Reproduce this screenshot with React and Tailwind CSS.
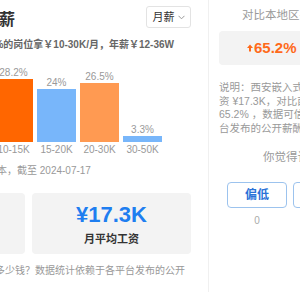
import React from 'react';

const bars = [
  { range: '10-15K', pct: '28.2%', color: 'bg-[#ff6600]', h: 'h-[63px]' },
  { range: '15-20K', pct: '24%', color: 'bg-[#78b6fa]', h: 'h-[53px]' },
  { range: '20-30K', pct: '26.5%', color: 'bg-[#ff9a52]', h: 'h-[59px]' },
  { range: '30-50K', pct: '3.3%', color: 'bg-[#78b6fa]', h: 'h-[6px]' },
];

export default function App() {
  return (
    <div className="w-[300px] h-[300px] overflow-hidden bg-white flex font-['Liberation_Sans','Noto_Sans_CJK_SC',sans-serif]">
      {/* ===== LEFT: distribution ===== */}
      <div className="w-[191px] shrink-0 flex flex-col">
        <div className="mt-[6px] h-[22px] flex items-center justify-between">
          <h2 className="shrink-0 ml-[-97px] mt-[5px] text-[16px] leading-[22px] font-bold text-[#333] whitespace-nowrap">
            西安嵌入式月薪
          </h2>
          <div className="w-[45px] h-[22px] border border-[#e3e3e3] rounded-[3px] flex items-center justify-center gap-[3px] text-[11px] text-[#333]">
            月薪
            <svg width="7" height="5" viewBox="0 0 7 5" fill="none">
              <path d="M0.5 0.8 L3.5 3.8 L6.5 0.8" stroke="#999" strokeWidth="1" />
            </svg>
          </div>
        </div>

        <p className="mt-[10px] ml-[-25px] text-[10px] leading-[14px] font-bold text-[#666] whitespace-nowrap">
          78.7%的岗位拿￥10-30K/月，年薪￥12-36W
        </p>

        <div className="mt-[15px] ml-[-6px] flex items-end gap-[4px]">
          {bars.map(b => (
            <div key={b.range} className="w-[39px] shrink-0 flex flex-col items-center">
              <span className="text-[10px] leading-[12px] text-[#999]">{b.pct}</span>
              <div className={`w-full ${b.h} ${b.color}`} />
            </div>
          ))}
        </div>
        <div className="mt-[1px] ml-[-6px] flex gap-[4px]">
          {bars.map(b => (
            <span key={b.range} className="w-[39px] shrink-0 text-center text-[10px] leading-[14px] text-[#999]">
              {b.range}
            </span>
          ))}
        </div>

        <p className="mt-[7px] ml-[-13px] text-[10px] leading-[14px] text-[#999] whitespace-nowrap">
          样本，截至 2024-07-17
        </p>

        <div className="mt-[15px] flex gap-[7px]">
          <div className="w-[159px] h-[61px] shrink-0 ml-[-134px] bg-[#f3f3f3] rounded-[4px]" />
          <div className="w-[159px] h-[61px] shrink-0 bg-[#f3f3f3] rounded-[4px] flex flex-col items-center pt-[9px]">
            <span className="text-[22px] leading-[26px] font-bold text-[#1e7ef0]">¥17.3K</span>
            <span className="mt-[4px] text-[11px] leading-[14px] font-bold text-[#333]">月平均工资</span>
          </div>
        </div>

        <p className="mt-[10px] ml-[-15px] text-[10px] leading-[14px] text-[#999] whitespace-nowrap">
          资多少钱？数据统计依赖于各平台发布的公开
        </p>
      </div>

      {/* ===== DIVIDER ===== */}
      <div className="ml-[17px] w-px h-[292px] shrink-0 bg-[#f0f0f0]" />

      {/* ===== RIGHT: compare ===== */}
      <div className="pl-[10px] flex flex-col shrink-0 w-[200px]">
        <p className="mt-[7px] ml-[23px] text-[11.5px] leading-[16px] text-[#999] whitespace-nowrap">
          对比本地区平均工资
        </p>

        <div className="mt-[8px] w-[110px] h-[34px] bg-[#f3f3f3] rounded-[4px] flex items-center pl-[28px] gap-[1px]">
          <svg width="6" height="8" viewBox="0 0 6 8">
            <path d="M3 0.5 L6 4 L4 4 L4 7.5 L2 7.5 L2 4 L0 4 Z" fill="#ff6a1a" />
          </svg>
          <span className="text-[15px] leading-[18px] font-bold text-[#ff6a1a]">65.2%</span>
        </div>

        <div className="mt-[16px] text-[10.5px] leading-[13.5px] text-[#999] whitespace-nowrap">
          <p>说明：西安嵌入式工程师月平均工</p>
          <p>资 ¥17.3K，对比西安平均工资高出</p>
          <p>65.2% ，数据可信度较高，数据来自各平</p>
          <p>台发布的公开薪酬</p>
        </div>

        <p className="mt-[14px] ml-[44px] text-[11.5px] leading-[16px] text-[#999] whitespace-nowrap">
          你觉得该工资水平
        </p>

        <div className="mt-[17px] ml-[8px] flex gap-[6px]">
          {['偏低', '适中'].map(label => (
            <div key={label} className="w-[60px] shrink-0 flex flex-col items-center">
              <button className="w-[60px] h-[26px] border border-[#9cc3ee] rounded-[4px] text-[12px] font-bold text-[#2a72d8]">
                {label}
              </button>
              <span className="mt-[6px] text-[10px] leading-[14px] text-[#aaa]">0</span>
            </div>
          ))}
        </div>
      </div>
    </div>
  );
}
